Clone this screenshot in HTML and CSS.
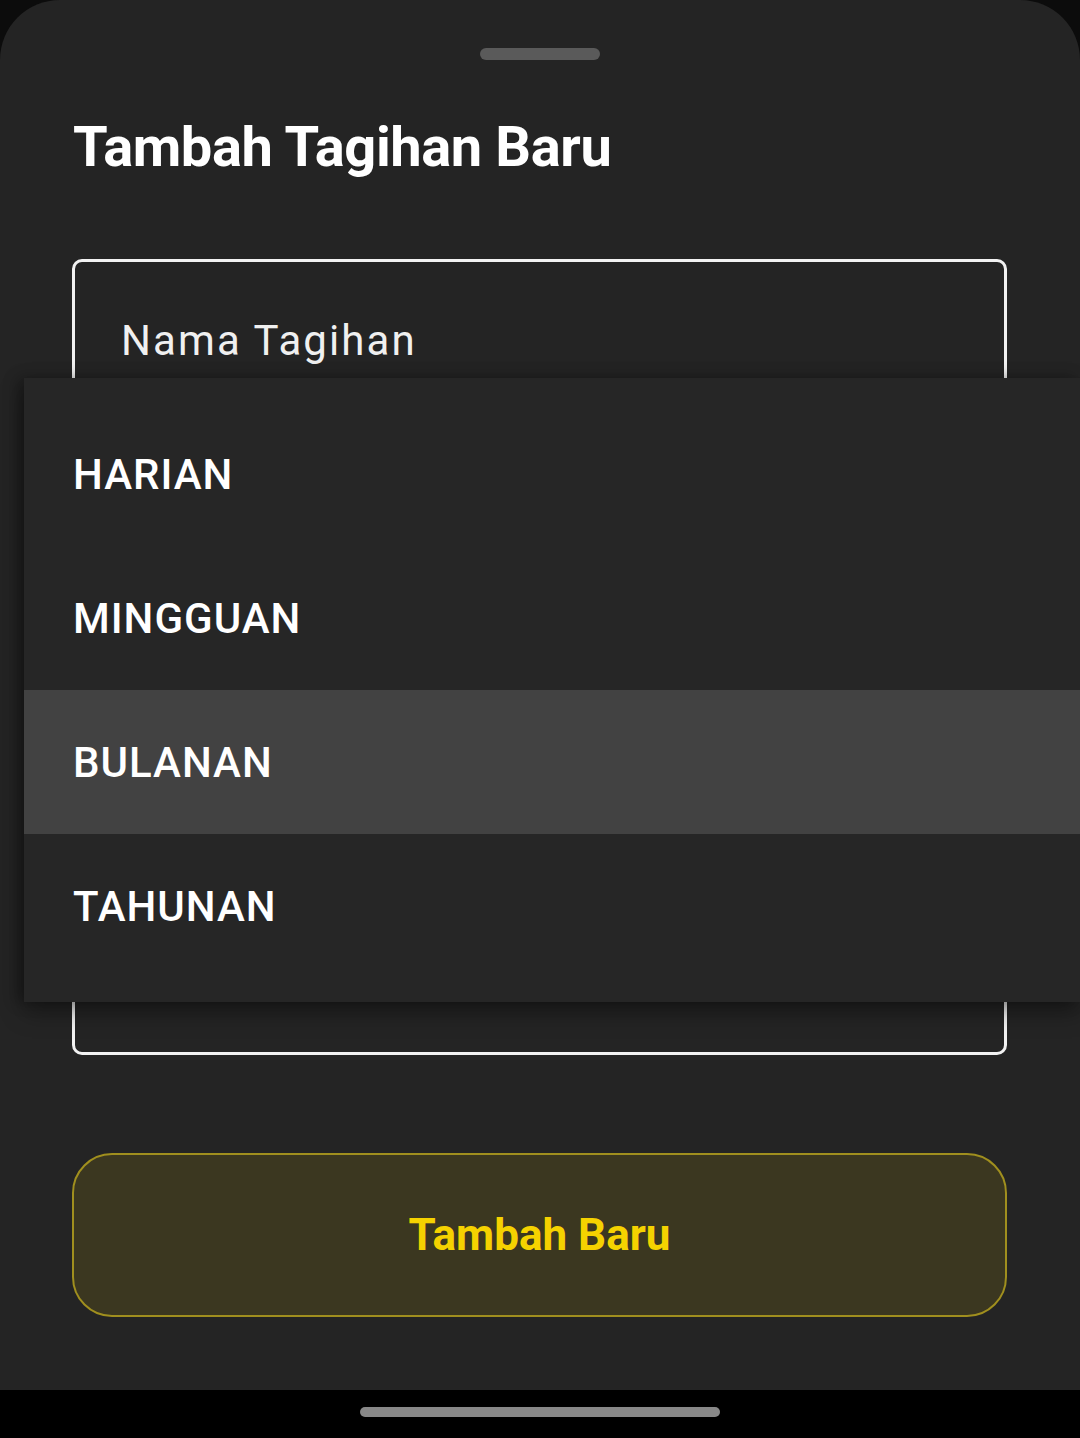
FILE: index.html
```html
<!DOCTYPE html>
<html lang="id">
<head>
<meta charset="utf-8">
<title>Tambah Tagihan Baru</title>
<link rel="stylesheet" href="styles.css">
</head>
<body>
<div class="screen">
  <section class="sheet">
    <div class="handle"></div>
    <h1 class="title">Tambah Tagihan Baru</h1>
    <div class="fields">
      <div class="field"><span class="label">Nama Tagihan</span></div>
      <div class="field"></div>
      <div class="field"></div>
      <div class="field"></div>
    </div>
    <button class="primary" type="button">Tambah Baru</button>

    <ul class="menu">
      <li class="menu-item">HARIAN</li>
      <li class="menu-item">MINGGUAN</li>
      <li class="menu-item selected">BULANAN</li>
      <li class="menu-item">TAHUNAN</li>
    </ul>
  </section>
  <nav class="navbar"><div class="pill"></div></nav>
</div>
</body>
</html>
```

FILE: styles.css
```css
* { box-sizing: border-box; }
html, body {
  margin: 0;
  padding: 0;
  background: #0c0c0c;
}
body {
  font-family: Roboto, "Noto Sans", "Liberation Sans", sans-serif;
  color: #fff;
}
.screen {
  width: 1080px;
  height: 1438px;
  display: flex;
  flex-direction: column;
  overflow: hidden;
}
.sheet {
  position: relative;
  flex: 1;
  background: #242424;
  border-radius: 60px 60px 0 0;
  padding: 48px 73px 0 72px;
  display: flex;
  flex-direction: column;
}
.handle {
  align-self: center;
  width: 120px;
  height: 12px;
  border-radius: 6px;
  background: #5a5a5a;
}
.title {
  margin: 55px 0 0 1px;
  font-size: 56px;
  line-height: 64px;
  font-weight: 700;
  color: #fff;
  letter-spacing: -0.4px;
}
.fields {
  margin-top: 80px;
  display: flex;
  flex-direction: column;
  gap: 68px;
}
.field {
  height: 148px;
  border: 3px solid #f2f2f2;
  border-radius: 10px;
  padding: 55px 0 0 46px;
}
.label {
  display: block;
  font-size: 42px;
  line-height: 48px;
  letter-spacing: 2.1px;
  color: #f0f0f0;
}
.primary {
  margin-top: 98px;
  height: 164px;
  width: 100%;
  border: 2.5px solid #a08f1e;
  border-radius: 40px;
  background: #3b3720;
  color: #f5d200;
  font-family: Roboto, "Noto Sans", "Liberation Sans", sans-serif;
  font-size: 44px;
  font-weight: 700;
  padding: 0;
}
.menu {
  position: absolute;
  top: 378px;
  left: 24px;
  right: 0;
  margin: 0;
  padding: 24px 0;
  list-style: none;
  background: #262626;
  box-shadow: 0 10px 22px rgba(0, 0, 0, 0.35), -6px 0 14px rgba(0, 0, 0, 0.3);
}
.menu-item {
  height: 144px;
  display: flex;
  align-items: center;
  padding-left: 49px;
  font-size: 42px;
  font-weight: 500;
  letter-spacing: 1px;
  color: #fff;
}
.menu-item.selected {
  background: #424242;
}
.navbar {
  height: 48px;
  background: #000;
  display: flex;
  justify-content: center;
  padding-top: 17px;
}
.pill {
  width: 360px;
  height: 10px;
  border-radius: 5px;
  background: #888;
}
```
